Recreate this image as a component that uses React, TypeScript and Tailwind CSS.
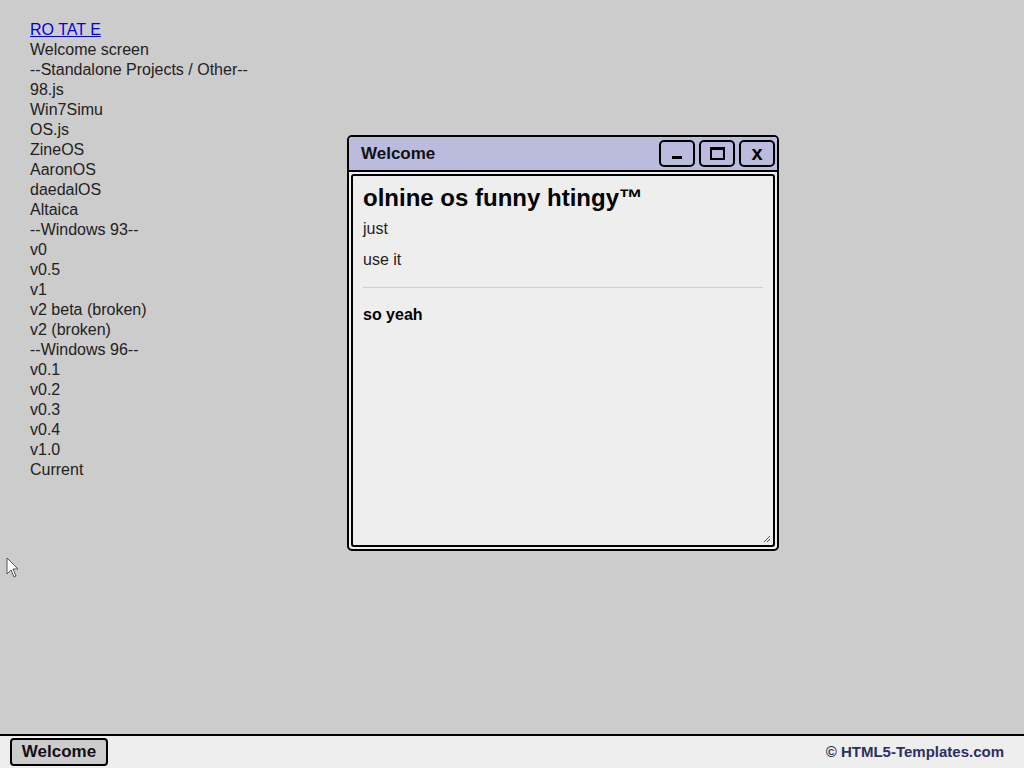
import React from "react";

const links = [
  "Welcome screen",
  "--Standalone Projects / Other--",
  "98.js",
  "Win7Simu",
  "OS.js",
  "ZineOS",
  "AaronOS",
  "daedalOS",
  "Altaica",
  "--Windows 93--",
  "v0",
  "v0.5",
  "v1",
  "v2 beta (broken)",
  "v2 (broken)",
  "--Windows 96--",
  "v0.1",
  "v0.2",
  "v0.3",
  "v0.4",
  "v1.0",
  "Current",
];

const TitleButton: React.FC<{ children: React.ReactNode }> = ({ children }) => (
  <div className="w-[36px] h-[27px] border-2 border-black rounded-[5px] bg-[#bbbbdd] flex items-center justify-center">
    {children}
  </div>
);

const App: React.FC = () => {
  return (
    <div className="relative w-full h-[768px] bg-[#cccccc] font-['Liberation_Sans',Arial,sans-serif] text-[#222] flex flex-col overflow-hidden">
      <div className="flex-1 pl-[30px] pt-[20px] text-[16px] leading-[20px]">
        <a href="#" className="text-[#0000ee] underline">RO TAT E</a>
        {links.map((l) => (
          <div key={l}>{l}</div>
        ))}
      </div>

      {/* window */}
      <div className="absolute left-[347px] top-[135px] w-[432px] h-[416px] border-2 border-black rounded-[5px] bg-[#eeeeee] flex flex-col overflow-hidden">
        <div className="h-[35px] shrink-0 bg-[#bbbbdd] border-b-2 border-black flex items-center justify-between pl-[12px] pr-[2px]">
          <span className="font-bold text-[17px] text-[#111]">Welcome</span>
          <div className="flex gap-[4px]">
            <TitleButton>
              <div className="w-[10px] h-[3px] bg-black mt-[8px]" />
            </TitleButton>
            <TitleButton>
              <div className="w-[15px] h-[13px] border-2 border-t-[3px] border-black" />
            </TitleButton>
            <TitleButton>
              <span className="font-bold text-[20px] leading-none text-black mb-[2px]">x</span>
            </TitleButton>
          </div>
        </div>
        <div className="flex-1 p-[2px] flex">
          <div className="relative flex-1 border-2 border-black rounded-[3px] bg-[#eeeeee] px-[10px] pt-[8px] text-[16px] text-[#222]">
            <h2 className="font-bold text-[24px] leading-[28px] text-black">olnine os funny htingy™</h2>
            <p className="mt-[8px] leading-[18px]">just</p>
            <p className="mt-[13px] leading-[18px]">use it</p>
            <hr className="mt-[18px] border-t border-[#cfcfcf]" />
            <p className="mt-[18px] leading-[18px] font-bold text-black">so yeah</p>
            <svg className="absolute right-[2px] bottom-[2px]" width="9" height="9" viewBox="0 0 9 9">
              <path d="M8 2 L2 8 M8 5 L5 8" stroke="#555" strokeWidth="1" />
            </svg>
          </div>
        </div>
      </div>

      {/* cursor */}
      <svg className="absolute left-[6px] top-[557px]" width="14" height="22" viewBox="0 0 14 22">
        <path d="M1 1 L1 17 L5 13 L8 20 L10 19 L7 12 L12 12 Z" fill="#fff" stroke="#555" strokeWidth="1" />
      </svg>

      {/* taskbar */}
      <div className="h-[34px] shrink-0 border-t-2 border-black bg-[#eeeeee] flex items-center justify-between pl-[10px] pr-[20px]">
        <div className="h-[28px] w-[98px] border-2 border-black rounded-[4px] bg-[#cccccc] flex items-center justify-center font-bold text-[17px] text-[#111]">
          Welcome
        </div>
        <span className="font-bold text-[15px] text-[#2c3062]">© HTML5-Templates.com</span>
      </div>
    </div>
  );
};

export default App;
